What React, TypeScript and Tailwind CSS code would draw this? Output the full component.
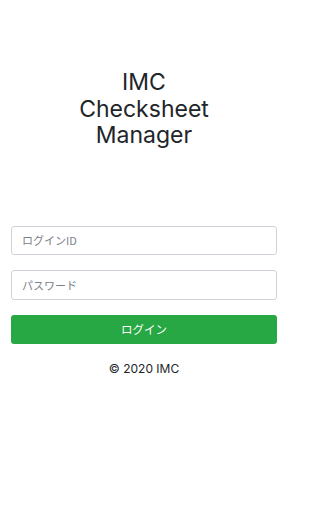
import React from "react";

export default function App() {
  return (
    <div className="min-h-[512px] w-full bg-white text-[#212529] font-['Inter','Noto_Sans_CJK_JP',sans-serif]">
      <div className="w-full max-w-[288px] px-[11px] pt-[69px]">
        <h1 className="text-center text-[23px] leading-[26.5px] font-normal">
          IMC
          <br />
          Checksheet
          <br />
          Manager
        </h1>
        <div className="mt-[77px] flex flex-col gap-[15px]">
          <input
            type="text"
            placeholder="ログインID"
            className="h-[29.5px] w-full rounded-[3px] border border-[#ced4da] bg-white px-[10px] text-[11px] font-['Noto_Sans_CJK_JP',sans-serif] placeholder:text-[#7a8189] outline-none"
          />
          <input
            type="password"
            placeholder="パスワード"
            className="h-[29.5px] w-full rounded-[3px] border border-[#ced4da] bg-white px-[10px] text-[11px] font-['Noto_Sans_CJK_JP',sans-serif] placeholder:text-[#7a8189] outline-none"
          />
          <button className="flex h-[29.5px] w-full items-center justify-center rounded-[3px] bg-[#28a745] text-[11.5px] text-white font-['Noto_Sans_CJK_JP',sans-serif]">
            ログイン
          </button>
        </div>
        <p className="mt-[18px] text-center text-[12px] leading-[14px]">© 2020 IMC</p>
      </div>
    </div>
  );
}
